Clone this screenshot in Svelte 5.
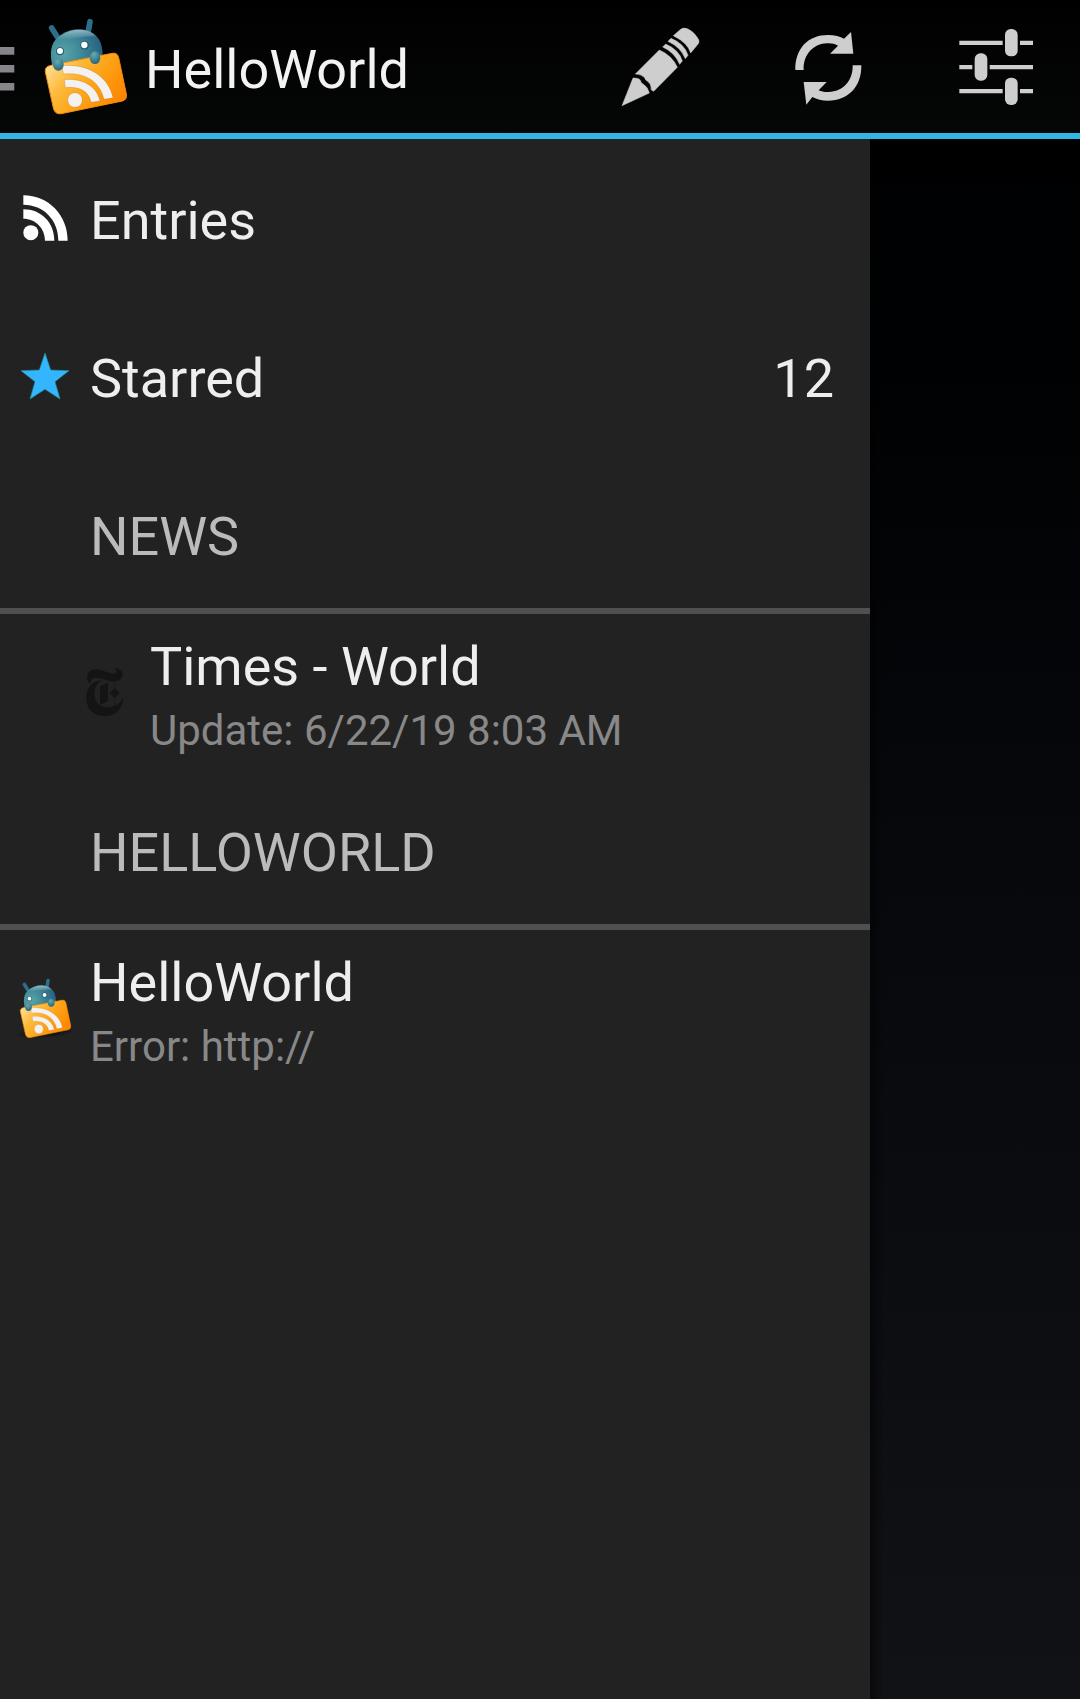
<script>
  const groups = [
    {
      name: 'NEWS',
      feeds: [{ title: 'Times - World', detail: 'Update: 6/22/19 8:03 AM', icon: 'times', nested: true }]
    },
    {
      name: 'HELLOWORLD',
      feeds: [{ title: 'HelloWorld', detail: 'Error: http://', icon: 'app', nested: false }]
    }
  ];
</script>

{#snippet appIcon(id)}
  <svg class="app-icon" viewBox="120 48 270 300" aria-hidden="true">
    <defs>
      <radialGradient id="{id}-head" gradientUnits="userSpaceOnUse" cx="190" cy="160" r="125">
        <stop offset="0" stop-color="#58a5a8" />
        <stop offset=".55" stop-color="#397f92" />
        <stop offset="1" stop-color="#235d7c" />
      </radialGradient>
      <linearGradient id="{id}-shine" x1="0" y1="0" x2="0" y2="1">
        <stop offset="0" stop-color="#c8dfe5" stop-opacity=".65" />
        <stop offset="1" stop-color="#c8dfe5" stop-opacity="0" />
      </linearGradient>
      <linearGradient id="{id}-folder" x1="0" y1=".2" x2="1" y2=".75">
        <stop offset="0" stop-color="#ffe29a" />
        <stop offset=".3" stop-color="#fdba3c" />
        <stop offset=".6" stop-color="#fda114" />
        <stop offset="1" stop-color="#ff8200" />
      </linearGradient>
      <radialGradient id="{id}-hand" cx=".4" cy=".25" r=".8">
        <stop offset="0" stop-color="#69aab0" />
        <stop offset="1" stop-color="#20627a" />
      </radialGradient>
      <radialGradient id="{id}-shadow">
        <stop offset="0" stop-color="#000" stop-opacity=".8" />
        <stop offset="1" stop-color="#000" stop-opacity="0" />
      </radialGradient>
    </defs>
    <ellipse cx="255" cy="318" rx="150" ry="26" fill="url(#{id}-shadow)" transform="rotate(-4 255 318)" />
    <path d="M155 84 172 111M270 65 264 98" stroke="#2c6f8a" stroke-width="17" stroke-linecap="round" />
    <path d="M157 200C149 158 151 132 174 111 211 78 272 80 296 117 305 131 307 145 309 175Z" fill="url(#{id}-head)" />
    <path d="M171 117C204 82 267 80 289 110 260 104 204 123 171 117Z" fill="url(#{id}-shine)" />
    <circle cx="180" cy="154" r="12" fill="#205e75" />
    <circle cx="254" cy="136" r="13" fill="#205e75" />
    <circle cx="180" cy="153" r="9" fill="#fff" />
    <circle cx="253" cy="135" r="9.5" fill="#fff" />
    <path d="M153 196 337 160Q352 157 356 173L379 282Q382 299 367 303L184 341Q167 344 161 328L136 216Q133 200 153 196Z" fill="url(#{id}-folder)" stroke="#f78b0c" stroke-width="3" />
    <g stroke="#b65b00" stroke-opacity=".25" stroke-width="3" fill="#f4f2f1">
      <path d="M186 197C263 190 326 229 339 293L312 298C300 245 256 215 190 222Z" />
      <path d="M193 239C249 234 290 259 300 303L273 307C267 274 239 258 196 263Z" />
      <circle cx="225" cy="300" r="22" />
    </g>
    <ellipse cx="175" cy="194" rx="16" ry="18" fill="url(#{id}-hand)" />
    <ellipse cx="285" cy="173" rx="16" ry="19" fill="url(#{id}-hand)" />
  </svg>
{/snippet}

<div class="screen">
  <header>
    <svg class="drawer-handle" viewBox="0 0 15 44" aria-hidden="true">
      <path d="M0 0h14.3v7.7H0zM0 18h14.3v7.5H0zM0 36h14.3v7.5H0z" fill="#85858a" />
    </svg>
    <div class="logo">{@render appIcon('bar')}</div>
    <h1>HelloWorld</h1>
    <nav>
      <button aria-label="Edit">
        <svg viewBox="-72 -30 504 399" fill="#cecece" stroke="#cecece" stroke-width="1.5">
          <path d="M220 77 242 58Q251 51 264 57 281 65 293 84 300 94 295 101L272 129Q264 99 220 77Z" />
          <path d="M204 94 213 85Q253 101 264 136L256 146Q242 112 204 94Z" />
          <path d="M188 111 197 102Q237 119 247 153L239 163Q224 127 188 111Z" />
          <path d="M178 120Q217 137 232 172L161 244 154 240Q154 222 143 214 136 212 134 203 125 193 106 192Z" />
          <path d="M99 204Q114 203 120 209 122 219 132 224 143 231 148 249L66 287Z" />
        </svg>
      </button>
      <button aria-label="Refresh">
        <svg viewBox="432 -30 504 399" fill="#cecece">
          <path d="M586 180C585 115 625 75 684 75 704 75 721 80 732 86L753 66 760 131H690L714 107C703 101 692 99 681 100 641 101 609 133 611 180Z" />
          <path d="M784 166C785 230 745 272 684 272 666 272 650 268 637 261L619 284 611 216H680L656 241C665 245 675 247 686 246 729 245 759 213 758 166Z" />
        </svg>
      </button>
      <button aria-label="Settings">
        <svg viewBox="-54 -30 504 399" fill="#cecece">
          <path d="M88 92H218V105H88zM270 92H309V105H270zM88 165H127V178H88zM179 165H309V178H179zM88 237H218V250H88zM270 237H309V250H270z" />
          <rect x="225" y="57" width="38" height="82" rx="17" />
          <rect x="134" y="130" width="38" height="82" rx="17" />
          <rect x="225" y="203" width="38" height="82" rx="17" />
        </svg>
      </button>
    </nav>
  </header>

  <main>
    <aside>
      <div class="row">
        <span class="icon">
          <svg class="small" viewBox="60 70 150 150" fill="#fff">
            <path d="M70 77C145 77 203 136 203 213H175C175 151 132 106 70 105Z" />
            <path d="M70 119C124 119 163 159 163 213H135C135 176 107 147 70 147Z" />
            <circle cx="92.500" cy="189" r="22.500" />
          </svg>
        </span>
        <span class="label">Entries</span>
      </div>
      <div class="row">
        <span class="icon">
          <svg class="small" viewBox="60 543 150 150">
            <path d="M135 549 152 600 207 602 165 635 180 687 135 658 90 687 105 635 63 602 118 600Z" fill="#33b5ff" stroke="#298d94" stroke-width="2" />
          </svg>
        </span>
        <span class="label">Starred</span>
        <span class="count">12</span>
      </div>
      {#each groups as group}
        <div class="row group"><span class="label">{group.name}</span></div>
        {#each group.feeds as feed}
          <div class="row feed" class:nested={feed.nested}>
            <span class="icon">
              {#if feed.icon === 'app'}
                <span class="feed-logo">{@render appIcon('feed')}</span>
              {:else}
                <svg class="small" viewBox="60 201 150 150" fill="#141414">
                  <path d="M88 251C77 237 80 209 105 208 128 207 146 222 163 221 171 220 173 214 165 204 184 205 191 217 187 229 181 247 160 248 141 241 123 235 105 229 96 237 92 241 94 248 88 251Z" />
                  <path d="M126 241C96 253 95 311 129 320 157 327 180 313 190 291 189 325 169 348 136 348 99 348 78 325 79 293 80 260 99 242 126 241Z" />
                  <path d="M120 259 144 248V303L120 314ZM149 279 164 264 179 279 164 294Z" />
                  <path d="M164 242V321" stroke="#191919" stroke-width="2" />
                </svg>
              {/if}
            </span>
            <span class="text">
              <span class="title">{feed.title}</span>
              <span class="detail">{feed.detail}</span>
            </span>
          </div>
        {/each}
      {/each}
    </aside>
    <div class="content"></div>
  </main>
</div>

<style>
  :global(body) { margin: 0; background: #000; }
  .screen {
    display: flex;
    flex-direction: column;
    width: 1080px;
    height: 1699px;
    overflow: hidden;
    font-family: Roboto, sans-serif;
    background: linear-gradient(#000 0, #000103 350px, #06080b 850px, #111215 1699px);
  }
  header {
    box-sizing: border-box;
    display: flex;
    align-items: center;
    flex: none;
    height: 139px;
    border-bottom: 6px solid #33b5e5;
    background: linear-gradient(#000, #050706);
  }
  .drawer-handle { width: 15px; height: 44px; margin-top: 5px; }
  .logo { width: 90px; height: 100px; margin: 0 0 1px 25px; }
  .app-icon { display: block; width: 100%; height: 100%; }
  h1 {
    margin: 7px 0 0 15px;
    color: #f3f3f3;
    font-size: 54px;
    font-weight: 400;
    line-height: 64px;
  }
  nav { display: flex; margin-left: auto; }
  button { width: 168px; height: 133px; padding: 0; border: 0; background: none; }
  button svg { display: block; width: 168px; height: 133px; }
  main { display: flex; flex: 1; }
  aside { box-sizing: border-box; width: 870px; padding-top: 1px; background: #222; }
  .content { flex: 1; background: linear-gradient(90deg, rgba(0, 0, 0, .5), transparent 14px); }
  .row {
    box-sizing: border-box;
    display: flex;
    align-items: center;
    height: 158px;
    padding-right: 36px;
  }
  .icon { display: flex; justify-content: center; flex: none; width: 90px; padding-bottom: 2px; }
  .small { width: 50px; height: 50px; }
  .label, .count { padding-top: 4px; }
  .label, .count, .title { color: #eee; font-size: 54px; line-height: 64px; white-space: nowrap; }
  .count { margin-left: auto; }
  .group { padding-left: 90px; padding-top: 6px; border-bottom: 6px solid #505050; }
  .group .label { color: #bbb; }
  .nested { padding-left: 60px; }
  .feed-logo { width: 56px; height: 62px; }
  .text { display: flex; flex-direction: column; padding-top: 5px; }
  .detail { margin-top: 7px; color: #888; font-size: 42px; line-height: 50px; white-space: nowrap; }
</style>
